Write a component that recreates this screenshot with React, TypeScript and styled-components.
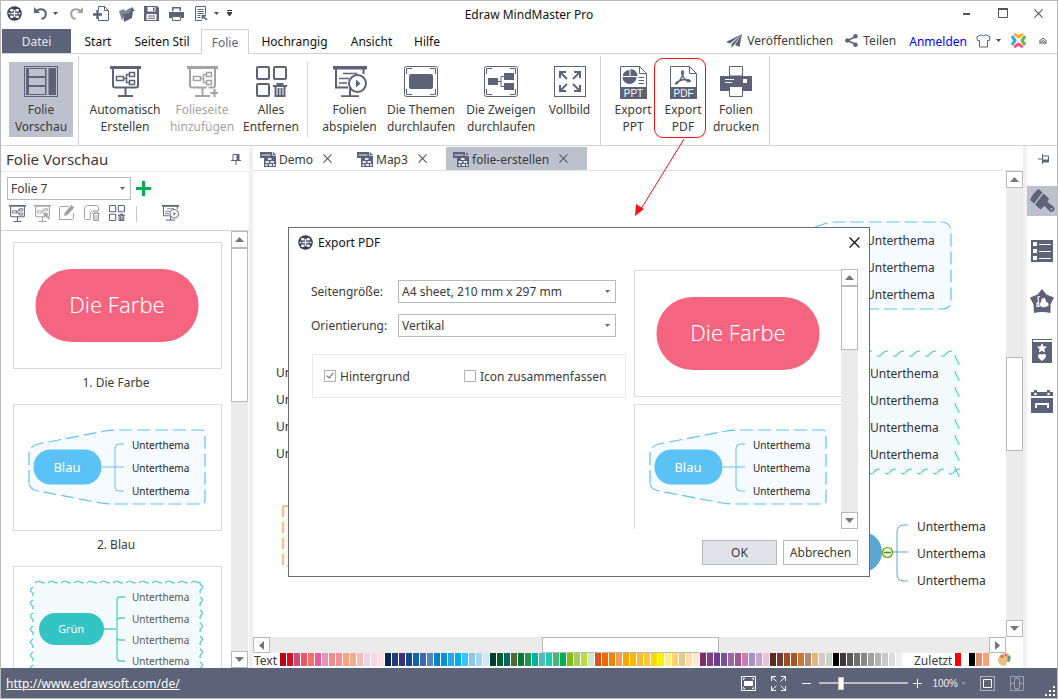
import React from "react";
import styled, { createGlobalStyle, css } from "styled-components";

const ink = "#5c6378";
const line = "#d2d2d4";
const selected = "#bcc1cd";
const edge = "#b9b9bb";
const grey = "#a3a3a3";

const GlobalStyle = createGlobalStyle`
  *, *::before, *::after { box-sizing: border-box; }
  body { margin: 0; background: #fff; }
  body, button, select, input {
    font-family: "Noto Sans", "Open Sans", sans-serif;
    font-size: 12px;
    color: #3a3a3a;
  }
  button { background: none; border: 0; padding: 0; cursor: pointer; }
  svg { display: block; flex: none; }
`;

/* ---------- window frame ---------- */

const Window = styled.div`
  position: relative;
  display: flex;
  flex-direction: column;
  height: 100vh;
  min-height: 600px;
  overflow: hidden;
  border: 1px solid ${edge};
  background: #fff;
`;

const TitleBar = styled.header`
  display: grid;
  grid-template-columns: 1fr auto 1fr;
  align-items: center;
  height: 27px;
  flex: none;
`;

const QuickTools = styled.div`
  display: flex;
  align-items: center;
  gap: 6px;
  padding: 0 0 2px 6px;
`;

const QuickButton = styled.button<{ $width?: number }>`
  display: flex;
  align-items: center;
  justify-content: center;
  width: ${(p) => p.$width ?? 19}px;
  height: 20px;
`;

const SplitButton = styled.div<{ $around?: number }>`
  display: flex;
  align-items: center;
  gap: 3px;
  margin: 0 ${(p) => p.$around ?? 0}px;
`;

const AppTitle = styled.h1`
  margin: 0;
  font-size: 12px;
  font-weight: 400;
  color: #111;
`;

const WindowButtons = styled.div`
  display: flex;
  justify-content: flex-end;
  gap: 17px;
  padding: 0 9px 3px 0;
`;

/* ---------- menu tabs ---------- */

const MenuRow = styled.nav`
  display: flex;
  align-items: stretch;
  height: 26px;
  flex: none;
  padding: 0 1px;
  border-bottom: 1px solid ${line};
`;

const MenuTab = styled.button<{ $width: number; $kind?: "file" | "open" }>`
  width: ${(p) => p.$width}px;
  padding-top: 2px;
  color: #111;
  ${(p) =>
    p.$kind === "file" &&
    css`
      margin: 1px 2px 0 0;
      padding-top: 0;
      background: ${ink};
      color: #e6e8ee;
    `}
  ${(p) =>
    p.$kind === "open" &&
    css`
      margin: 1px 0 -1px;
      padding-top: 0;
      border: 1px solid ${line};
      border-bottom: 0;
      background: #fff;
      color: ${ink};
    `}
`;

const MenuSide = styled.div`
  display: flex;
  align-items: center;
  margin-left: auto;
  padding-right: 8px;
`;

const SideAction = styled.button<{ $gap: number }>`
  display: flex;
  align-items: center;
  gap: 5px;
  margin-right: ${(p) => p.$gap}px;
`;

const SignIn = styled.a`
  margin-right: 9px;
  padding-top: 1px;
  color: #0000f0;
  text-decoration: none;
`;

/* ---------- ribbon ---------- */

const Ribbon = styled.section`
  display: flex;
  height: 92px;
  flex: none;
  padding-left: 1px;
  border-bottom: 1px solid ${line};
`;

const RibbonGroup = styled.div<{ $divider?: "full" | "short" }>`
  position: relative;
  display: flex;
  align-items: flex-start;
  padding: 8px 6px 0 7px;
  &::after {
    content: "";
    position: absolute;
    right: 0;
    top: ${(p) => (p.$divider === "short" ? 8 : 2)}px;
    bottom: ${(p) => (p.$divider === "short" ? 8 : 0)}px;
    border-right: 1px solid ${line};
  }
`;

const RibbonButton = styled.button<{ $width: number; $active?: boolean; $off?: boolean }>`
  position: relative;
  display: flex;
  flex-direction: column;
  align-items: center;
  width: ${(p) => p.$width}px;
  height: 75px;
  padding-top: 4px;
  line-height: 17px;
  background: ${(p) => (p.$active ? selected : "transparent")};
  color: ${(p) => (p.$off ? grey : "#3a3a3a")};
`;

const RibbonIcon = styled.span`
  display: flex;
  height: 35px;
`;

const RibbonLabel = styled.span`
  white-space: pre;
`;

const Highlight = styled.span`
  position: absolute;
  inset: -4px 2px -1px -4px;
  border: 1px solid #f01414;
  border-radius: 9px;
`;

/* ---------- main area ---------- */

const Main = styled.div`
  display: flex;
  flex: 1;
  min-height: 0;
`;

const Splitter = styled.div`
  width: 4px;
  flex: none;
  background: #f0f0f0;
`;

const SlidePanel = styled.aside`
  display: flex;
  flex-direction: column;
  width: 248px;
  flex: none;
`;

const PanelHead = styled.div`
  display: flex;
  align-items: center;
  justify-content: space-between;
  height: 26px;
  flex: none;
  padding: 0 7px 0 5px;
  border-bottom: 1px solid #e6e6e6;
`;

const PanelTitle = styled.h2`
  margin: 0;
  font-size: 15px;
  font-weight: 400;
`;

const PanelControls = styled.div`
  height: 59px;
  flex: none;
  padding: 5px 0 0 6px;
  border-bottom: 1px solid ${line};
`;

const ControlLine = styled.div`
  display: flex;
  align-items: center;
  gap: 5px;
`;

const PanelTools = styled.div`
  display: flex;
  align-items: center;
  gap: 7px;
  padding: 5px 0 0 2px;
`;

const ToolButton = styled.button`
  display: flex;
  width: 18px;
  height: 18px;
`;

const ToolDivider = styled.span`
  width: 1px;
  height: 16px;
  margin: 0 18px 0 2px;
  background: #c4c4c4;
`;

const SlideArea = styled.div`
  display: flex;
  flex: 1;
  min-height: 0;
  padding-right: 1px;
`;

const SlideList = styled.div<{ $pad?: boolean }>`
  flex: 1;
  min-width: 0;
  overflow: hidden;
  padding: ${(p) => (p.$pad ? "11px 9px 0 12px" : "1px 0 0")};
`;

const Slide = styled.figure<{ $gap: number }>`
  width: 209px;
  margin: 0 0 ${(p) => p.$gap}px;
`;

const SlideCard = styled.div`
  height: 127px;
  border: 1px solid #dadada;
  background: #fff;
`;

const SlideCaption = styled.figcaption`
  height: 35px;
  padding: 5px 3px 0 0;
  text-align: center;
  line-height: 18px;
`;

/* ---------- form controls ---------- */

const SelectWrap = styled.span<{ $width: number }>`
  position: relative;
  display: block;
  width: ${(p) => p.$width}px;
`;

const Select = styled.select`
  display: block;
  width: 100%;
  height: 23px;
  padding: 0 18px 0 3px;
  appearance: none;
  border: 1px solid #b8b8b8;
  border-radius: 0;
  background: #fff;
`;

const SelectCaret = styled.span`
  position: absolute;
  right: 6px;
  top: 10px;
  pointer-events: none;
`;

const Check = styled.input`
  position: relative;
  width: 12px;
  height: 12px;
  margin: 0;
  appearance: none;
  border: 1px solid #b0b0b0;
  background: #fff;
  &:checked::after {
    content: "";
    position: absolute;
    left: 3px;
    top: 0;
    width: 4px;
    height: 7px;
    border: solid #666;
    border-width: 0 1px 1px 0;
    transform: rotate(40deg);
  }
`;

/* ---------- scroll bars ---------- */

const Bar = styled.div<{ $dir: "column" | "row" }>`
  display: flex;
  flex-direction: ${(p) => p.$dir};
  flex: ${(p) => (p.$dir === "column" ? "none" : "1")};
  ${(p) => (p.$dir === "column" ? "width: 17px;" : "height: 16px;")}
  background: #ebebeb;
`;

const BarEnd = styled.button`
  display: flex;
  align-items: center;
  justify-content: center;
  flex: 0 0 17px;
  border: 1px solid ${edge};
  background: #fff;
`;

const BarSpace = styled.span<{ $grow: number }>`
  flex: ${(p) => p.$grow} 1 0;
`;

const BarThumb = styled.span<{ $grow: number }>`
  flex: ${(p) => p.$grow - 2} 1 2px;
  border: 1px solid ${edge};
  background: #fff;
`;

/* ---------- document column ---------- */

const DocColumn = styled.main`
  display: flex;
  flex-direction: column;
  flex: 1;
  min-width: 0;
`;

const DocTabs = styled.div`
  display: flex;
  height: 25px;
  flex: none;
  padding-top: 1px;
  border-bottom: 1px solid #e4e4e4;
`;

const DocTab = styled.div<{ $width: number; $active?: boolean }>`
  display: flex;
  align-items: center;
  gap: 2px;
  width: ${(p) => p.$width}px;
  padding: 2px 0 0 7px;
  background: ${(p) => (p.$active ? selected : "transparent")};
`;

const DocClose = styled.button`
  display: flex;
  margin: 0 0 2px 8px;
`;

const Stage = styled.div`
  position: relative;
  display: flex;
  flex: 1;
  min-height: 0;
`;

const Canvas = styled.div`
  flex: 1;
  min-width: 0;
  overflow: hidden;
  background: #fefefe;
`;

const BottomBar = styled.div`
  display: flex;
  flex: none;
  padding-right: 17px;
`;

const ColourRow = styled.div`
  display: flex;
  height: 15px;
  flex: none;
  align-items: flex-start;
  overflow: hidden;
  padding-left: 1px;
  line-height: 15px;
`;

const ColourName = styled.span<{ $width: number }>`
  width: ${(p) => p.$width}px;
  flex: none;
`;

const Swatches = styled.div<{ $after: number }>`
  display: flex;
  gap: 1px;
  margin-right: ${(p) => p.$after}px;
`;

const Swatch = styled.button<{ $colour: string }>`
  width: 6px;
  height: 13px;
  flex: none;
  background: ${(p) => p.$colour};
`;

/* ---------- dialog ---------- */

const Dialog = styled.section`
  position: absolute;
  left: 35px;
  top: 56px;
  width: 582px;
  border: 1px solid #6c6c6c;
  background: #fff;
`;

const DialogHead = styled.div`
  display: flex;
  align-items: center;
  gap: 5px;
  height: 30px;
  padding: 0 9px 2px 9px;
`;

const DialogTitle = styled.h2`
  flex: 1;
  margin: 0;
  font-size: 12px;
  font-weight: 400;
  color: #111;
`;

const DialogBody = styled.div`
  display: flex;
  gap: 8px;
  padding: 11px 11px 0 22px;
`;

const Fields = styled.div`
  flex: 1;
  padding-top: 11px;
`;

const Field = styled.div`
  display: flex;
  align-items: center;
  margin-bottom: 11px;
`;

const FieldLabel = styled.label`
  width: 87px;
`;

const Options = styled.div`
  display: flex;
  align-items: center;
  height: 44px;
  margin: 17px 0 0 1px;
  padding-left: 11px;
  border: 1px solid #e8e8e8;
`;

const Option = styled.label<{ $width: number }>`
  display: flex;
  align-items: center;
  gap: 4px;
  width: ${(p) => p.$width}px;
  white-space: nowrap;
`;

const Preview = styled.div`
  display: flex;
  width: 224px;
  height: 260px;
`;

const DialogActions = styled.div`
  display: flex;
  justify-content: flex-end;
  gap: 6px;
  padding: 11px;
`;

const DialogButton = styled.button<{ $primary?: boolean }>`
  width: 75px;
  height: 25px;
  border: 1px solid ${edge};
  background: ${(p) => (p.$primary ? "#e2e3e8" : "#fff")};
`;

/* ---------- right rail and status ---------- */

const Rail = styled.aside`
  display: flex;
  flex-direction: column;
  width: 30px;
  flex: none;
`;

const RailPin = styled.button`
  display: flex;
  align-items: center;
  justify-content: center;
  height: 26px;
  margin: 0 0 14px 3px;
`;

const RailButton = styled.button<{ $active?: boolean }>`
  display: flex;
  align-items: center;
  justify-content: center;
  height: 30px;
  margin-bottom: 20px;
  background: ${(p) => (p.$active ? selected : "transparent")};
`;

const StatusBar = styled.footer`
  position: relative;
  display: flex;
  align-items: center;
  justify-content: space-between;
  height: 30px;
  flex: none;
  padding: 0 33px 0 5px;
  background: ${ink};
`;

const StatusLink = styled.a`
  color: #fff;
`;

const StatusTools = styled.div`
  display: flex;
  align-items: center;
`;

const StatusButton = styled.button<{ $after: number }>`
  display: flex;
  margin-right: ${(p) => p.$after}px;
`;

const Zoom = styled.input`
  width: 89px;
  height: 14px;
  margin: 0 5px 0 8px;
  appearance: none;
  background: linear-gradient(#bfbfbf, #bfbfbf) center / 100% 2px no-repeat;
  &::-webkit-slider-thumb {
    appearance: none;
    width: 6px;
    height: 13px;
    border: 1px solid #c8c8c8;
    background: #fff;
  }
`;

const ZoomValue = styled.span`
  margin-right: 3px;
  font-family: "Liberation Sans", sans-serif;
  font-size: 10px;
  color: #eceef2;
`;

const Grip = styled.span`
  position: absolute;
  right: 1px;
  bottom: 1px;
`;

const Pointer = styled.svg`
  position: absolute;
  left: 633px;
  top: 137px;
  pointer-events: none;
`;

/* ---------- icons ---------- */

const Caret = ({ fill = "#4a4a4a" }: { fill?: string }) => (
  <svg width="5" height="3" viewBox="0 0 5 3"><path d="M0 0h5L2.5 3z" fill={fill} /></svg>
);

const Cross = ({ size = 9, stroke = "#555" }: { size?: number; stroke?: string }) => (
  <svg width={size} height={size} viewBox="0 0 10 10"><path d="M.5.5l9 9M9.5.5l-9 9" stroke={stroke} strokeWidth="1.2" /></svg>
);

const AppLogo = () => (
  <svg width="15" height="15" viewBox="0 0 15 15">
    <circle cx="7.500" cy="7.500" r="7.300" fill="#3b4254" />
    <g fill="#f0f1f5">
      <rect x="3" y="3" width="3.500" height="2.500" rx="1" /><rect x="8.500" y="3" width="3.500" height="2.500" rx="1" />
      <rect x="4" y="6.700" width="7" height="1.600" rx=".8" /><rect x="6.800" y="4" width="1.400" height="7" />
      <rect x="1.500" y="6.500" width="2" height="2" rx="1" /><rect x="11.500" y="6.500" width="2" height="2" rx="1" />
      <rect x="3" y="9.500" width="3.500" height="2.500" rx="1" /><rect x="8.500" y="9.500" width="3.500" height="2.500" rx="1" />
    </g>
  </svg>
);

const Undo = ({ flip, colour }: { flip?: boolean; colour: string }) => (
  <svg width="15" height="13" viewBox="0 0 15 13">
    <g transform={flip ? "matrix(-1 0 0 1 15 0)" : undefined}>
      <path d="M1 0v6h6z" fill={colour} />
      <path d="M3 4.500C7 .5 13 2.500 12.800 7c-.1 2.500-2 4.500-4.300 5" fill="none" stroke={colour} strokeWidth="2" />
    </g>
  </svg>
);

const NewDoc = () => (
  <svg width="17" height="17" viewBox="0 0 17 17" fill="none" stroke={ink}>
    <path d="M5.500 5V1.500h6l4 4v10h-10v-2M11.500 1.500v4h4" />
    <path d="M0 9.500h9M4.500 5v9" strokeWidth="2.400" />
  </svg>
);

const OpenDoc = () => (
  <svg width="16" height="16" viewBox="0 0 16 16">
    <path d="M0 5l5-2 1 2 5-3 1 4-7 3-2 6z" fill="#7f8596" />
    <path d="M4 8l6-1 2-3h-2l3-3 3 4-2 0-1 7-8 4z" fill={ink} />
  </svg>
);

const Save = () => (
  <svg width="15" height="15" viewBox="0 0 15 15">
    <path d="M0 0h13l2 2v13H0z" fill={ink} />
    <path d="M3.500 1h8v4.500h-8zM2.500 8h10v6h-10z" fill="#fff" />
    <path d="M9 1.500h1.500V5H9zM4 9.500h7v1H4zM4 11.800h7v1H4z" fill={ink} />
  </svg>
);

const Print = () => (
  <svg width="15" height="14" viewBox="0 0 15 14">
    <path d="M3 0h9v4H3zM0 5h15v6h-3V9H3v2H0z" fill={ink} />
    <path d="M4.500 1.500h6V4h-6z" fill="#fff" />
    <path d="M3.500 9.500h8v4h-8z" fill="#fff" stroke={ink} />
  </svg>
);

const PagePreview = () => (
  <svg width="13" height="15" viewBox="0 0 13 15" fill="none" stroke={ink}>
    <path d="M7 14.500H.5V.5h10V8M2.500 3.500h6M2.500 5.500h6M2.500 7.500h6M2.500 9.500h3M2.500 11.500h3" />
    <path d="M8 10l4 4M7.500 13V9.500H11" strokeWidth="1.600" />
  </svg>
);

const board = (c: string) => (
  <g fill="none" stroke={c}>
    <path d="M0 1.500h31" strokeWidth="3" />
    <path d="M3 3v16.500q0 2 2 2h21q2 0 2-2V3" strokeWidth="2" />
    <path d="M15.500 21v9M8 30h15" strokeWidth="2" />
    <path d="M6.500 10.500h7v4h-7zM19.500 6.500h5v4h-5zM19.500 14.500h5v4h-5zM13.500 12.500h3M19 8.500h-2.500v8h2.500" strokeWidth="1.500" />
  </g>
);

const BoardIcon = ({ size = 31, colour = ink, mark }: { size?: number; colour?: string; mark?: "plus" | "cursor" }) => (
  <svg width={size} height={size} viewBox="0 0 31 31">
    {board(colour)}
    {mark === "plus" && <path d="M20.500 21v7" stroke="#fff" strokeWidth="2" />}
    {mark === "plus" && <path d="M27.500 23v8M23.500 27h8" stroke={colour} strokeWidth="2" />}
    {mark === "cursor" && <path d="M17 13l11 2-3 3 5 6-3 3-5-6-4 4z" fill={colour} stroke="#fff" />}
  </svg>
);

const PlayBoard = ({ size = 34 }: { size?: number }) => (
  <svg width={size} height={size * 31 / 34} viewBox="0 0 34 31" fill="none" stroke={ink}>
    <path d="M0 1.800h34" strokeWidth="3.500" />
    <path d="M3 3v18.500h12M30.500 3v5M17 22v8M8 30.200h18" strokeWidth="2" />
    <path d="M6 12.500h10M6 17h8M10 7.500h14" strokeWidth="1.600" />
    <circle cx="24.500" cy="17.500" r="8.500" fill="#fff" strokeWidth="2" />
    <path d="M23 13.500v8l4.500-4z" fill={ink} stroke="none" />
  </svg>
);

const PreviewIcon = () => (
  <svg width="34" height="31" viewBox="0 0 34 31" fill="none" stroke={ink}>
    <rect x=".5" y=".5" width="33" height="30" /><rect x="2" y="2" width="30" height="27" fill={ink} stroke="none" />
    <path d="M5 3h16v7H5zM5 12h16v7H5zM5 21h16v7H5z" fill={selected} stroke="none" />
    <path d="M23.500 2v27" stroke={selected} strokeWidth="2" />
  </svg>
);

const ClearAll = ({ size = 31 }: { size?: number }) => (
  <svg width={size} height={size} viewBox="0 0 31 31" fill="none" stroke={ink} strokeWidth="2">
    <rect x="1" y="1" width="12" height="12" rx="1" /><rect x="18" y="1" width="12" height="12" rx="1" />
    <rect x="1" y="18" width="12" height="12" rx="1" />
    <path d="M17 20h14M21.500 20v-2h5v2M19.500 21v9h9v-9M22.500 22v7M25.500 22v7" />
  </svg>
);

const Corners = () => (
  <path d="M2.500 8V2.500H8M26 2.500h5.500V8M31.500 23v5.500H26M8 28.500H2.500V23" stroke={ink} fill="none" />
);

const ThemeRun = () => (
  <svg width="34" height="31" viewBox="0 0 34 31">
    <rect x=".5" y=".5" width="33" height="30" rx="2" fill="#fff" stroke={ink} /><Corners />
    <rect x="5" y="8" width="24" height="15" rx="2" fill={ink} />
  </svg>
);

const BranchRun = () => (
  <svg width="34" height="31" viewBox="0 0 34 31">
    <rect x=".5" y=".5" width="33" height="30" rx="2" fill="#fff" stroke={ink} /><Corners />
    <path d="M4 12h10v7H4zM20 7h10v7H20zM20 17h10v7H20z" fill={ink} />
    <path d="M14 15.500h3M20 10.500h-3v10h3" stroke={ink} fill="none" />
  </svg>
);

const FullScreen = () => (
  <svg width="32" height="31" viewBox="0 0 32 31" fill="none" stroke={ink}>
    <rect x=".5" y=".5" width="31" height="30" />
    <path d="M6 12V6h6M20 6h6v6M26 19v6h-6M12 25H6v-6" strokeWidth="2" />
    <path d="M6 6l7 7M26 6l-7 7M26 25l-7-7M6 25l7-7" strokeWidth="1.800" />
  </svg>
);

const FileIcon = ({ text }: { text: "PPT" | "PDF" }) => (
  <svg width="27" height="33" viewBox="0 0 27 33">
    <path d="M.5 32V.5h19l7 7V32M19.500.5v7h7" fill="#fff" stroke={ink} />
    <path d="M0 21h27v12H0z" fill={ink} />
    {text === "PPT" ? (
      <g fill={ink}>
        <path d="M9.500 4a7 7 0 1 0 7 7h-7z" />
        <path d="M10.500 3a7 7 0 0 1 7 7h-7z" />
        <path d="M2 10.500h8" stroke="#fff" />
        <path d="M18.500 11.500h5.500M18.500 14.500h5.500M18.500 17.500h5.500" stroke={ink} />
      </g>
    ) : (
      <path d="M12.500 5c2.500 0 0 7-5.500 12.500-2 1.500-2-.5 1-2s8-2.200 11-1.500c2.500.8.500 2.300-2 1C13 12.500 10 5 12.500 5z" fill="none" stroke={ink} strokeWidth="1.500" />
    )}
    <text x="13.500" y="31" textAnchor="middle" fontSize="10" fontFamily="Liberation Sans, sans-serif" fill="#fff">{text}</text>
  </svg>
);

const BigPrinter = () => (
  <svg width="32" height="31" viewBox="0 0 32 31">
    <path d="M0 10h32v15H0z" fill={ink} />
    <path d="M9.500.5h13V10h-13zM9.500 20.500h13v10h-13z" fill="#fff" stroke={ink} />
    <path d="M5 13h9v1H5zM5 16h7v1H5zM23 13h4v4h-4z" fill="#fff" />
  </svg>
);

const Plane = () => (
  <svg width="16" height="14" viewBox="0 0 16 14"><path d="M16 0L0 8l4 1.500zM16 0L5.500 10v4l2.500-3zM16 0L9 11l4.500 2z" fill={ink} /></svg>
);

const Share = () => (
  <svg width="13" height="13" viewBox="0 0 13 13">
    <path d="M11 2.500L2.500 6.500l8.500 4" fill="none" stroke={ink} strokeWidth="1.500" />
    <g fill={ink}><circle cx="10.500" cy="2.300" r="2.200" /><circle cx="2.300" cy="6.500" r="2.200" /><circle cx="10.500" cy="10.700" r="2.200" /></g>
  </svg>
);

const Shirt = () => (
  <svg width="15" height="14" viewBox="0 0 15 14"><path d="M5 .8Q7.500 3 10 .8l4 2L13.500 6.500H11.500v6.500h-8V6.500H1.500L.8 2.800z" fill="#fff" stroke={ink} /></svg>
);

const Petals = () => (
  <svg width="15" height="15" viewBox="0 0 15 15" fill="none" strokeWidth="3" strokeLinecap="round" strokeLinejoin="round">
    <path d="M4.200 1.600L7.500 4l3.300-2.400" stroke="#f9b02c" />
    <path d="M1.600 4.200L4 7.500l-2.400 3.300" stroke="#35a8e0" />
    <path d="M13.400 4.200L11 7.500l2.400 3.300" stroke="#6cb33f" />
    <path d="M4.200 13.400L7.500 11l3.300 2.400" stroke="#f0557f" />
  </svg>
);

const Pin = ({ turned }: { turned?: boolean }) => (
  <svg width="12" height="12" viewBox="0 0 12 12">
    <g transform={turned ? "rotate(90 6 6)" : undefined}>
      <path d="M3 1.500h6v6H3zM1 7.500h10M6 8v4" fill="none" stroke={ink} />
      <path d="M6.500 1H9v6H6.500z" fill={ink} />
    </g>
  </svg>
);

const PenBox = () => (
  <svg width="16" height="16" viewBox="0 0 16 16">
    <path d="M10 1.500H1.500q-1 0-1 1v12h13q1 0 1-1V8" fill="none" stroke={grey} />
    <path d="M5 11l.8-3.500L12.500 0l2.800 2.500L8.500 10z" fill={grey} />
  </svg>
);

const ShapeBin = () => (
  <svg width="16" height="16" viewBox="0 0 16 16" fill="none" stroke={grey}>
    <path d="M6 14.500H1.500q-1 0-1-1v-10q0-3 3-3h9q2 0 2 2V6h-6Q6.500 6 6.500 8z" />
    <path d="M8 8.500h8M10.500 8V7h3v1M9.500 9v6.500h5V9M11 10v5M13 10v5" />
  </svg>
);

const DocIcon = () => (
  <svg width="17" height="17" viewBox="0 0 17 17">
    <path d="M0 1h13l3 3v12H4V7H0z" fill={ink} />
    <path d="M12.500 1v3.500H16" stroke="#e6e8ee" strokeWidth=".8" fill="none" />
    <path d="M1.500 3.500h9v1h-9zM8 7h3.500v2H8zM5.500 10h3.500v2H5.500zM10.500 10h3.500v2h-3.500zM5.500 13h2v2h-2zM9 13h3v2H9zM13 13h2v2h-2z" fill="#e6e8ee" />
  </svg>
);

const Brush = () => (
  <svg width="25" height="24" viewBox="0 0 25 24">
    <path d="M8.500 0l4 3.500L4 14.500 0 11q3-7 8.500-11z" fill={ink} />
    <path d="M13.500 4.500L19 9.500 17.500 13l5.500 4q2 2 1.500 4-1.500 2.500-4.500 1.500L14.500 17 10.500 20.500 5 15.500z" fill={ink} />
    <circle cx="21.500" cy="20" r="1" fill={selected} />
  </svg>
);

const ListIcon = () => (
  <svg width="22" height="22" viewBox="0 0 22 22">
    <path d="M0 0h22v22H0z" fill={ink} />
    <path d="M2 2h4v4H2zM2 9h4v4H2zM2 16h4v4H2zM8 4h12v1H8zM8 11h12v1H8zM8 18h12v1H8z" fill="#fff" />
  </svg>
);

const Clipart = () => (
  <svg width="24" height="24" viewBox="0 0 24 24">
    <path d="M12 0l4.500 5.500L24 8.500l-3.500 7V24Q12 22 4 24l-.5-8.500L0 8.500l7.500-3z" fill={ink} />
    <path d="M10 7.500q-3 .5-2 2t0 2.500M7 14l1.500-1 .5 4.500H7z" fill="none" stroke="#fff" strokeWidth="1.200" />
    <path d="M11 18q-2-3 0-5 0-4 3-4 2 .5 2 4 3 0 2.500 3.500Q16 19 11 18z" fill="#fff" />
  </svg>
);

const Symbols = () => (
  <svg width="20" height="24" viewBox="0 0 20 24">
    <path d="M0 0h20v1H1v2h19v21H0z" fill={ink} />
    <path d="M10 4l1.500 3.300 3.500.4-2.600 2.400.7 3.400L10 11.800l-3.100 1.700.7-3.400L5 7.700l3.500-.4zM10 22q-4-3-4-5t2-2 2 1q0-1 2-1t2 2-4 5z" fill="#fff" />
  </svg>
);

const Calendar = () => (
  <svg width="22" height="23" viewBox="0 0 22 23">
    <path d="M0 2h3V0h3v2h10V0h3v2h3v4H0zM0 8h22v15H0z" fill={ink} />
    <path d="M4 13h14v5h-2v-3H6v3H4z" fill="#fff" />
    <circle cx="4.500" cy="4" r="1.300" fill="#fff" /><circle cx="17.500" cy="4" r="1.300" fill="#fff" />
  </svg>
);

const Palette = () => (
  <svg width="13" height="13" viewBox="0 0 13 13">
    <path d="M7 0c4 0 6 3 6 6s-3 2-4 3 0 4-3 4-6-3-6-6 3-7 7-7z" fill="#e8c27c" />
    <circle cx="4" cy="3.500" r="1.500" fill="#e0604c" /><circle cx="8" cy="2" r="1.500" fill="#d96ca8" />
    <circle cx="11" cy="4.500" r="1.500" fill="#3f9e8c" /><circle cx="10.500" cy="7.500" r="1.300" fill="#4a7fc4" />
  </svg>
);

/* ---------- slides ---------- */

const wave = (count: number, step: number, shape: string, x: number, y: number, down = false) =>
  Array.from({ length: count }, (_, i) => `M${down ? x : x + i * step} ${down ? y + i * step : y}${shape}`).join("");

const RedSlide = () => (
  <svg width="207" height="125">
    <rect x="21.500" y="26" width="163" height="73" rx="36" fill="#f5657f" />
    <text x="103" y="70" textAnchor="middle" fontSize="22" fontWeight="300" fill="#fff">Die Farbe</text>
  </svg>
);

const BlueSlide = () => (
  <svg width="207" height="125">
    <path d="M15 78V50Q15 41 24 39L91 26Q97 25 104 25H187Q191 25 191 29V95Q191 99 187 99H98Q93 99 87 98L24 86Q15 84 15 78Z" fill="#f5fbff" stroke="#62c1f3" strokeWidth="1.200" strokeDasharray="13 5" />
    <rect x="19.500" y="44.500" width="68" height="35" rx="17" fill="#5bc2f5" />
    <path d="M88 62h22M110 39h-5q-4 0-4 4v39q0 4 4 4h5" fill="none" stroke="#62c1f3" />
    <text x="53" y="67" textAnchor="middle" fontSize="13" fill="#fff">Blau</text>
    {[44, 67, 90].map((y) => <text key={y} x="118" y={y} fontSize="10" fill="#222">Unterthema</text>)}
  </svg>
);

const GreenSlide = () => (
  <svg width="207" height="125">
    <path d="M19 16h168v109H19z" fill="#f4fbfc" />
    <path
      d={wave(13, 13, "q3-3 5-1.500t5 1.500", 21, 16) + wave(9, 13, "q4 3 1.500 5t-1 4", 186, 17, true) + wave(9, 13, "q-4 3-1.500 5t1 4", 19, 20, true)}
      fill="none" stroke="#4fc8c8" strokeWidth="1.200"
    />
    <rect x="25" y="46" width="65" height="32" rx="16" fill="#35c4c4" />
    <path d="M90 62h12M111 30h-5q-3 0-3 3v58q0 3 3 3h5M111 51h-5q-3 0-3 3v16q0 3 3 3h5" fill="none" stroke="#5cccc8" strokeWidth="1.300" />
    <text x="57" y="66" textAnchor="middle" fontSize="11" fill="#fff">Grün</text>
    {[34, 56, 77, 98].map((y) => <text key={y} x="118" y={y} fontSize="10" fill="#555">Unterthema</text>)}
  </svg>
);

const slides: { id: string; caption?: string; art: React.ReactNode }[] = [
  { id: "red", caption: "1. Die Farbe", art: <RedSlide /> },
  { id: "blue", caption: "2. Blau", art: <BlueSlide /> },
  { id: "green", art: <GreenSlide /> },
];

/* ---------- mind map ---------- */

const Topics = ({ x, ys }: { x: number; ys: number[] }) => (
  <>{ys.map((y) => <text key={y} x={x} y={y} fontSize="12" fill="#303030">Unterthema</text>)}</>
);

const MindMap = () => (
  <svg width="100%" height="100%">
    <path d="M545 61L568 54Q576 51 584 51H688Q698 51 698 61V130Q698 138 688 138H560" fill="#f5fbff" stroke="#62c1f3" strokeWidth="1.200" strokeDasharray="13 5" />
    <Topics x={613} ys={[74, 101, 128]} />
    <path d="M560 183h144v119H560z" fill="#f4fbfc" />
    <path
      d={wave(6, 16, "q3 1 5-2t6-3", 608, 185) + wave(8, 16, "q0 2 2 5t2 5", 702, 184, true) + wave(6, 16, "q3 2 5-1t6-3", 616, 302)}
      fill="none" stroke="#4fc8c8" strokeWidth="1.200"
    />
    <Topics x={617} ys={[207, 234, 261, 288]} />
    <circle cx="609" cy="381" r="20" fill="#5aa8d2" />
    <path d="M639 381h16M655 354h-4q-7 0-7 7v42q0 7 7 7h4" fill="none" stroke="#5aa8d2" />
    <circle cx="634.500" cy="381.500" r="5" fill="#eaf6d8" stroke="#5da112" strokeWidth="1.200" />
    <path d="M631 381.500h7" stroke="#4c8f0c" strokeWidth="1.500" />
    <Topics x={664} ys={[360, 387, 414]} />
    <Topics x={23} ys={[206, 233, 260, 287]} />
    <path d="M30 335v60h60v-60z" fill="#fff8f2" stroke="#f7bd8c" strokeWidth="2" strokeDasharray="11 5" />
    <path d="M30 335h10" stroke="#f7bd8c" strokeWidth="2" />
  </svg>
);

const palette = (
  "b50718 da0a20 c94f7a ec5565 ef6f70 ea5a9f e295b5 ee8c90 f4909a ffa07a f2ac92 f7bcb8 ead4ea fcd4e6 fde0e6 " +
  "0d2550 233c78 3c2f7c 0d4a90 0c67a4 4163b0 5584c4 0082d0 0790d4 29a8e0 00aef0 30c8f8 90c4ec a0d8f0 cceaf4 " +
  "004030 00602c 006860 506a30 007840 20984a 00b0a0 50bcb8 1eccb0 48b878 00b050 80c010 a4cc60 c0d840 cce8c8 " +
  "e0501e f06a00 f58400 f59c50 f5a800 ffb400 ffb830 ffc830 ffd800 fff000 fff080 ffd468 e8c890 ffdca8 fce8d0 " +
  "7c2c6c 863c84 6c3c94 78509c 9c689c a05890 d078b0 a890d0 c8a4c8 ecc0dc " +
  "5c2c18 743c30 9c4c28 a85424 c47840 b88870 dcb884 d4c8c4 c8d4c8 " +
  "000000 403838 585858 707070 888888 a0a0a0 b4b4b4 c8c8c8 dcdcdc eeeeee"
).split(" ");

const recent = ["ff0000", "ffffff", "000000", "de9070", "ffa07a"];

const arrowPath = { up: "M0 5h9L4.500 0z", down: "M0 0h9L4.500 5z", left: "M5 0v9L0 4.500z", right: "M0 0v9l5-4.500z" };

const Arrow = ({ to }: { to: keyof typeof arrowPath }) => (
  <svg width={to === "up" || to === "down" ? 9 : 5} height={to === "up" || to === "down" ? 5 : 9}>
    <path d={arrowPath[to]} fill="#767676" />
  </svg>
);

const ScrollBar = ({ dir, before, size, after }: { dir: "column" | "row"; before: number; size: number; after: number }) => (
  <Bar $dir={dir}>
    <BarEnd aria-label="Zurück"><Arrow to={dir === "column" ? "up" : "left"} /></BarEnd>
    <BarSpace $grow={before} />
    <BarThumb $grow={size} />
    <BarSpace $grow={after} />
    <BarEnd aria-label="Weiter"><Arrow to={dir === "column" ? "down" : "right"} /></BarEnd>
  </Bar>
);

const DropDown = ({ id, label, width, value }: { id: string; label?: string; width: number; value: string }) => (
  <SelectWrap $width={width}>
    <Select id={id} aria-label={label}><option>{value}</option></Select>
    <SelectCaret><Caret fill="#666" /></SelectCaret>
  </SelectWrap>
);

type Command = { label: string; width: number; icon: React.ReactNode; active?: boolean; off?: boolean; marked?: boolean };

const commandGroups: { divider: "full" | "short"; items: Command[] }[] = [
  { divider: "full", items: [{ label: "Folie\nVorschau", width: 64, icon: <PreviewIcon />, active: true }] },
  {
    divider: "short",
    items: [
      { label: "Automatisch\nErstellen", width: 78, icon: <BoardIcon /> },
      { label: "Folieseite\nhinzufügen", width: 76, icon: <BoardIcon colour={grey} mark="plus" />, off: true },
      { label: "Alles\nEntfernen", width: 62, icon: <ClearAll /> },
    ],
  },
  {
    divider: "full",
    items: [
      { label: "Folien\nabspielen", width: 69, icon: <PlayBoard /> },
      { label: "Die Themen\ndurchlaufen", width: 74, icon: <ThemeRun /> },
      { label: "Die Zweigen\ndurchlaufen", width: 86, icon: <BranchRun /> },
      { label: "Vollbild", width: 51, icon: <FullScreen /> },
    ],
  },
  {
    divider: "full",
    items: [
      { label: "Export\nPPT", width: 50, icon: <FileIcon text="PPT" /> },
      { label: "Export\nPDF", width: 50, icon: <FileIcon text="PDF" />, marked: true },
      { label: "Folien\ndrucken", width: 56, icon: <BigPrinter /> },
    ],
  },
];

export default function App() {
  return (
    <Window>
      <GlobalStyle />
      <TitleBar>
        <QuickTools>
          <AppLogo />
          <SplitButton $around={3}>
            <QuickButton aria-label="Rückgängig"><Undo colour={ink} /></QuickButton>
            <QuickButton aria-label="Verlauf" $width={5}><Caret /></QuickButton>
          </SplitButton>
          <QuickButton aria-label="Wiederholen"><Undo flip colour="#a0a0a0" /></QuickButton>
          <QuickButton aria-label="Neu"><NewDoc /></QuickButton>
          <QuickButton aria-label="Öffnen"><OpenDoc /></QuickButton>
          <QuickButton aria-label="Speichern"><Save /></QuickButton>
          <QuickButton aria-label="Drucken"><Print /></QuickButton>
          <SplitButton>
            <QuickButton aria-label="Seitenansicht"><PagePreview /></QuickButton>
            <QuickButton aria-label="Optionen" $width={5}><Caret /></QuickButton>
          </SplitButton>
          <QuickButton aria-label="Anpassen" $width={9}>
            <svg width="5" height="7"><path d="M0 .5h5M0 2.500h5L2.500 6z" fill="#444" stroke="#444" /></svg>
          </QuickButton>
        </QuickTools>
        <AppTitle>Edraw MindMaster Pro</AppTitle>
        <WindowButtons>
          <QuickButton aria-label="Minimieren"><svg width="7" height="4"><path d="M0 3h7" stroke="#555" strokeWidth="2" /></svg></QuickButton>
          <QuickButton aria-label="Maximieren"><svg width="10" height="10"><path d="M.5 1h9v8.500h-9z" fill="none" stroke="#555" /><path d="M0 1h10" stroke="#555" strokeWidth="2" /></svg></QuickButton>
          <QuickButton aria-label="Schließen"><Cross /></QuickButton>
        </WindowButtons>
      </TitleBar>

      <MenuRow>
        <MenuTab $width={69} $kind="file">Datei</MenuTab>
        <MenuTab $width={50}>Start</MenuTab>
        <MenuTab $width={78}>Seiten Stil</MenuTab>
        <MenuTab $width={48} $kind="open">Folie</MenuTab>
        <MenuTab $width={91}>Hochrangig</MenuTab>
        <MenuTab $width={63}>Ansicht</MenuTab>
        <MenuTab $width={48}>Hilfe</MenuTab>
        <MenuSide>
          <SideAction $gap={12}><Plane />Veröffentlichen</SideAction>
          <SideAction $gap={13}><Share />Teilen</SideAction>
          <SignIn href="#anmelden">Anmelden</SignIn>
          <SideAction $gap={10} aria-label="Design"><Shirt /><Caret /></SideAction>
          <SideAction $gap={12} aria-label="Apps"><Petals /></SideAction>
          <SideAction $gap={0} aria-label="Menüband ausblenden">
            <svg width="10" height="7"><path d="M1 4.500L5 1l4 3.500M1.500 6L5 3.500 8.500 6z" fill="none" stroke="#555" /></svg>
          </SideAction>
        </MenuSide>
      </MenuRow>

      <Ribbon>
        {commandGroups.map((group, i) => (
          <RibbonGroup key={i} $divider={group.divider}>
            {group.items.map((c) => (
              <RibbonButton key={c.label} $width={c.width} $active={c.active} $off={c.off}>
                <RibbonIcon>{c.icon}</RibbonIcon>
                <RibbonLabel>{c.label}</RibbonLabel>
                {c.marked && <Highlight />}
              </RibbonButton>
            ))}
          </RibbonGroup>
        ))}
      </Ribbon>

      <Main>
        <SlidePanel>
          <PanelHead>
            <PanelTitle>Folie Vorschau</PanelTitle>
            <button aria-label="Anheften"><Pin /></button>
          </PanelHead>
          <PanelControls>
            <ControlLine>
              <DropDown id="folie" label="Folie" width={124} value="Folie 7" />
              <button aria-label="Folie hinzufügen">
                <svg width="15" height="15"><path d="M0 7.500h15M7.500 0v15" stroke="#00ae50" strokeWidth="3" /></svg>
              </button>
            </ControlLine>
            <PanelTools>
              <ToolButton aria-label="Automatisch erstellen"><BoardIcon size={17} /></ToolButton>
              <ToolButton aria-label="Auswahl"><BoardIcon size={17} colour={grey} mark="cursor" /></ToolButton>
              <ToolButton aria-label="Bearbeiten"><PenBox /></ToolButton>
              <ToolButton aria-label="Entfernen"><ShapeBin /></ToolButton>
              <ToolButton aria-label="Alles entfernen"><ClearAll size={16} /></ToolButton>
              <ToolDivider />
              <ToolButton aria-label="Abspielen"><PlayBoard size={17} /></ToolButton>
            </PanelTools>
          </PanelControls>
          <SlideArea>
            <SlideList $pad>
              {slides.map((s) => (
                <Slide key={s.id} $gap={0}>
                  <SlideCard>{s.art}</SlideCard>
                  {s.caption && <SlideCaption>{s.caption}</SlideCaption>}
                </Slide>
              ))}
            </SlideList>
            <ScrollBar dir="column" before={0} size={154} after={248} />
          </SlideArea>
        </SlidePanel>
        <Splitter />

        <DocColumn>
          <DocTabs>
            <DocTab $width={97}><DocIcon />Demo<DocClose aria-label="Demo schließen"><Cross /></DocClose></DocTab>
            <DocTab $width={96}><DocIcon />Map3<DocClose aria-label="Map3 schließen"><Cross /></DocClose></DocTab>
            <DocTab $width={141} $active><DocIcon />folie-erstellen<DocClose aria-label="folie-erstellen schließen"><Cross /></DocClose></DocTab>
          </DocTabs>
          <Stage>
            <Canvas><MindMap /></Canvas>
            <ScrollBar dir="column" before={169} size={94} after={169} />
            <Dialog role="dialog" aria-labelledby="export-title">
              <DialogHead>
                <AppLogo />
                <DialogTitle id="export-title">Export PDF</DialogTitle>
                <button aria-label="Schließen"><Cross size={11} stroke="#111" /></button>
              </DialogHead>
              <DialogBody>
                <Fields>
                  <Field><FieldLabel htmlFor="size">Seitengröße:</FieldLabel><DropDown id="size" width={218} value="A4 sheet, 210 mm x 297 mm" /></Field>
                  <Field><FieldLabel htmlFor="orientation">Orientierung:</FieldLabel><DropDown id="orientation" width={218} value="Vertikal" /></Field>
                  <Options>
                    <Option $width={140}><Check type="checkbox" defaultChecked />Hintergrund</Option>
                    <Option $width={150}><Check type="checkbox" />Icon zusammenfassen</Option>
                  </Options>
                </Fields>
                <Preview>
                  <SlideList>
                    {slides.slice(0, 2).map((s) => (
                      <Slide key={s.id} $gap={7}><SlideCard>{s.art}</SlideCard></Slide>
                    ))}
                  </SlideList>
                  <ScrollBar dir="column" before={0} size={64} after={162} />
                </Preview>
              </DialogBody>
              <DialogActions>
                <DialogButton $primary>OK</DialogButton>
                <DialogButton>Abbrechen</DialogButton>
              </DialogActions>
            </Dialog>
          </Stage>
          <BottomBar><ScrollBar dir="row" before={272} size={177} after={270} /></BottomBar>
          <ColourRow>
            <ColourName $width={26}>Text</ColourName>
            <Swatches $after={12}>{palette.map((c) => <Swatch key={c} $colour={`#${c}`} aria-label={`#${c}`} />)}</Swatches>
            <ColourName $width={41}>Zuletzt</ColourName>
            <Swatches $after={9}>{recent.map((c) => <Swatch key={c} $colour={`#${c}`} aria-label={`#${c}`} />)}</Swatches>
            <Palette />
          </ColourRow>
        </DocColumn>
        <Splitter />

        <Rail>
          <RailPin aria-label="Anheften"><Pin turned /></RailPin>
          <RailButton $active aria-label="Stil"><Brush /></RailButton>
          <RailButton aria-label="Gliederung"><ListIcon /></RailButton>
          <RailButton aria-label="Clipart"><Clipart /></RailButton>
          <RailButton aria-label="Symbole"><Symbols /></RailButton>
          <RailButton aria-label="Kalender"><Calendar /></RailButton>
        </Rail>
      </Main>

      <StatusBar>
        <StatusLink href="http://www.edrawsoft.com/de/">http://www.edrawsoft.com/de/</StatusLink>
        <StatusTools>
          <StatusButton $after={15} aria-label="Seite einpassen">
            <svg width="15" height="15" fill="none" stroke="#fff"><path d="M.5.5h14v14H.5z" /><path d="M3 5h9v5H3z" fill="#fff" stroke="none" /><path d="M2.500 4V2.500H4M11 2.500h1.500V4M12.500 11v1.500H11M4 12.500H2.500V11" /></svg>
          </StatusButton>
          <StatusButton $after={16} aria-label="Vollbild">
            <svg width="15" height="15" fill="none" stroke="#fff"><path d="M.5 5V.5H5M10 .5h4.500V5M14.500 10v4.500H10M5 14.500H.5V10M.5.5l5 5M14.500.5l-5 5M14.500 14.500l-5-5M.5 14.500l5-5" /></svg>
          </StatusButton>
          <StatusButton $after={0} aria-label="Verkleinern"><svg width="9" height="9"><path d="M0 4.500h9" stroke="#fff" /></svg></StatusButton>
          <Zoom type="range" min="0" max="100" defaultValue="22" aria-label="Zoom" />
          <StatusButton $after={10} aria-label="Vergrößern"><svg width="9" height="9"><path d="M0 4.500h9M4.500 0v9" stroke="#fff" /></svg></StatusButton>
          <ZoomValue>100%</ZoomValue>
          <StatusButton $after={14} aria-label="Zoomstufen"><Caret fill="#878c9c" /></StatusButton>
          <StatusButton $after={15} aria-label="Eine Seite">
            <svg width="15" height="15" fill="none" stroke="#fff"><path d="M.5.5h14v14H.5z" strokeDasharray="1 1" /><path d="M3.500 3.500h8v8h-8z" /></svg>
          </StatusButton>
          <StatusButton $after={0} aria-label="Seitenbreite">
            <svg width="14" height="15" fill="none" stroke="#9da1ae"><path d="M.5.500h13v14H.5zM4.500 2.500h5v10h-5zM1 7.500h3M10 7.500h3M7 .5v2M7 12.500v2" /></svg>
          </StatusButton>
        </StatusTools>
        <Grip>
          <svg width="11" height="11"><path d="M8 0h2v2H8zM4 4h2v2H4zM8 4h2v2H8zM0 8h2v2H0zM4 8h2v2H4zM8 8h2v2H8z" fill="#fff" /></svg>
        </Grip>
      </StatusBar>

      <Pointer width="55" height="82">
        <path d="M50 1L7 71" stroke="#f01414" />
        <path d="M1 78L2 66l8 5z" fill="#f01414" />
      </Pointer>
    </Window>
  );
}
